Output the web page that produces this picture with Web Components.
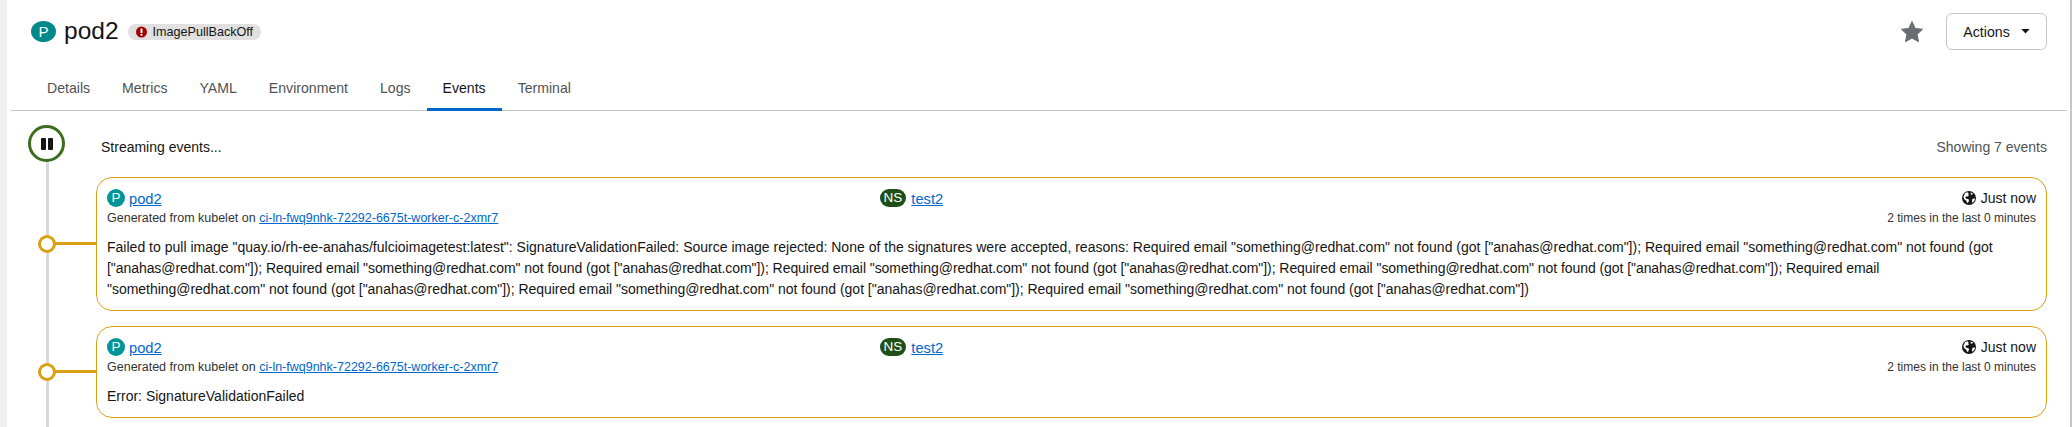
<!DOCTYPE html>
<html>
<head>
<meta charset="utf-8">
<title>pod2 events</title>
<style>
html, body { margin: 0; height: 100%; background: #fff; overflow: hidden; }
body { font-family: "Liberation Sans", sans-serif; color: #151515; }
</style>
</head>
<body>
<pod-page></pod-page>
<script>
const CLAUSE = 'Required email "something@redhat.com" not found (got ["anahas@redhat.com"]);';
// letter-spacing per line keeps the line ends where the reference has them
const LINES = [
  ['Failed to pull image "quay.io/rh-ee-anahas/fulcioimagetest:latest": SignatureValidationFailed: Source image rejected: None of the signatures were accepted, reasons: ' + CLAUSE + ' Required email "something@redhat.com" not found (got', '.01px'],
  ['["anahas@redhat.com"]); ' + CLAUSE + ' ' + CLAUSE + ' ' + CLAUSE + ' Required email', '-.06px'],
  ['"something@redhat.com" not found (got ["anahas@redhat.com"]); ' + CLAUSE + ' Required email "something@redhat.com" not found (got ["anahas@redhat.com"])', '-.03px']
];

customElements.define('res-badge', class ResBadge extends HTMLElement {
  constructor() {
    super();
    this.attachShadow({ mode: 'open' }).innerHTML = `
<style>
:host {
  display: inline-flex; align-items: center; justify-content: center;
  height: 18px; min-width: 18px; padding: 0 4px; box-sizing: border-box;
  border-radius: 9px; background: var(--bg, #009596); color: #fff;
  font-size: 13.5px; line-height: 18px;
}
</style><slot></slot>`;
  }
});

customElements.define('page-heading', class PageHeading extends HTMLElement {
  constructor() {
    super();
    this.attachShadow({ mode: 'open' }).innerHTML = `
<style>
:host { display: flex; align-items: center; height: 63px; padding: 0 23px 0 24px; box-sizing: border-box; }
.p { width: 25px; height: 21px; border-radius: 50%; background: #00898b; color: #fff; font-size: 15px;
  display: flex; align-items: center; justify-content: center; margin-right: 8px; }
h1 { margin: 0 0 2px; font-size: 24.5px; font-weight: 400; line-height: 30px; }
.status { display: inline-flex; align-items: center; gap: 6px; height: 16px; margin-left: 9px; padding: 0 8px 0 8px;
  border-radius: 8px; background: #e0e0e0; font-size: 12.6px; }
.grow { flex: 1; }
.star { margin-right: 22px; }
button { font: inherit; font-size: 14.2px; color: #151515; background: #fff; border: 1px solid #c7c7c7; border-radius: 6px;
  width: 101px; height: 37px; display: flex; align-items: center; justify-content: center; gap: 11px; padding: 0; }
</style>
<div class="p">P</div>
<h1>pod2</h1>
<span class="status">
  <svg width="11" height="12" viewBox="0 0 11 12"><circle cx="5.500" cy="6" r="5.500" fill="#a30000"/><rect x="4.500" y="2.500" width="2" height="4.500" rx=".6" fill="#fff"/><circle cx="5.500" cy="8.800" r="1.100" fill="#fff"/></svg>
  ImagePullBackOff
</span>
<div class="grow"></div>
<svg class="star" width="24" height="24" viewBox="0 0 24 24"><path d="M12 1.500l3.200 6.900 7.300.9-5.400 5.100 1.400 7.300L12 18.100l-6.500 3.600 1.400-7.300L1.500 9.300l7.300-.9z" fill="#6a6e73" stroke="#6a6e73" stroke-width="1" stroke-linejoin="round"/></svg>
<button>Actions <svg width="9" height="5" viewBox="0 0 10 6"><path d="M0 0h10L5 5.500z" fill="#151515"/></svg></button>`;
  }
});

customElements.define('tab-bar', class TabBar extends HTMLElement {
  constructor() {
    super();
    const tabs = ['Details', 'Metrics', 'YAML', 'Environment', 'Logs', 'Events', 'Terminal'];
    this.attachShadow({ mode: 'open' }).innerHTML = `
<style>
:host { display: flex; height: 48px; margin: 0 3px 0 4px; padding-left: 20px; border-bottom: 1px solid #c7c7c7; box-sizing: border-box; font-size: 14.1px; }
a { display: flex; align-items: center; padding: 3px 16px 0; color: #4f5255; position: relative; }
a.on { color: #151515; }
a.on::after { content: ""; position: absolute; left: 0; right: 0; bottom: -1px; height: 3px; background: #06c; }
</style>
${tabs.map(t => `<a class="${t === 'Events' ? 'on' : ''}">${t}</a>`).join('')}`;
  }
});

customElements.define('event-card', class EventCard extends HTMLElement {
  constructor() {
    super();
    this.attachShadow({ mode: 'open' }).innerHTML = `
<style>
:host { display: block; position: relative; margin-left: 89px; border: 1px solid #daa015; border-radius: 16px; padding: 11px 10px 10px 10px; background: #fff; }
:host(:not(:first-child)) { margin-top: 15px; }
.dot { position: absolute; left: -59px; top: 50%; margin-top: -9px; width: 18px; height: 18px; box-sizing: border-box; border: 3px solid #daa015; border-radius: 50%; background: #fff; z-index: 1; }
.tick { position: absolute; left: -42px; width: 42px; top: 50%; margin-top: -2px; height: 3px; background: #daa015; }
.top { display: grid; grid-template-columns: 40% 1fr auto; }
.res { display: flex; align-items: center; gap: 4px; height: 18px; font-size: 14px; }
.res a { font-size: 14.7px; margin-top: 2px; }
.mid { margin-left: 1px; }
.mid .res { gap: 5px; }
a { color: #06c; text-decoration: underline; }
.sub { font-size: 12px; color: #333; line-height: 18px; margin-top: 2px; }
.sub.left { font-size: 12.5px; }
.right { display: flex; flex-direction: column; align-items: flex-end; }
.msg { font-size: 14px; line-height: 21px; margin-top: 10px; white-space: nowrap; }
</style>
<div class="dot"></div><div class="tick"></div>
<div class="top">
  <div>
    <div class="res"><res-badge>P</res-badge><a>pod2</a></div>
    <div class="sub left">Generated from kubelet on <a>ci-ln-fwq9nhk-72292-6675t-worker-c-2xmr7</a></div>
  </div>
  <div class="mid"><div class="res"><res-badge style="--bg:#1e4f18">NS</res-badge><a>test2</a></div></div>
  <div class="right">
    <div class="res" style="gap:5px"><svg width="14" height="14" viewBox="0 0 16 16"><circle cx="8" cy="8" r="8" fill="#151515"/><path d="M3.500 2.200l2.700-.7 1.500 1-.8 1.300 1.200 1-1.900 1.500-1.800.1-.6 1.200 1.500 1.600h1.900l.8 1.300-.7 2.400-1.300.7-1.300-2.800-2.200-1.500-.9-2.500zM10 1.600l2.600 1.300-1 1.400-1.600-.2zM11.800 9.200l2.700-1 .2 2.200-2.400 3-.9-.7z" fill="#fff"/></svg><span>Just now</span></div>
    <div class="sub">2 times in the last 0 minutes</div>
  </div>
</div>
<div class="msg"><slot></slot></div>`;
  }
});

customElements.define('events-view', class EventsView extends HTMLElement {
  constructor() {
    super();
    this.attachShadow({ mode: 'open' }).innerHTML = `
<style>
:host { display: block; position: relative; height: 316px; overflow: hidden; padding-right: 23px; }
.rail { position: absolute; left: 39px; top: 40px; bottom: 0; width: 3px; background: #d8d8d8; }
.head { display: flex; align-items: center; justify-content: space-between; box-sizing: border-box; height: 66px; padding-top: 5px; margin-left: 94px; font-size: 14px; }
.head .r { color: #4f5255; }
.pause { position: absolute; left: 21px; top: 14px; width: 37px; height: 37px; box-sizing: border-box; border: 3px solid #3d6e1e; border-radius: 50%; background: #fff; display: flex; align-items: center; justify-content: center; gap: 2px; }
.pause i { width: 5px; height: 12px; background: #151515; border-radius: 1px; }
</style>
<div class="rail"></div>
<div class="pause"><i></i><i></i></div>
<div class="head"><span>Streaming events...</span><span class="r">Showing 7 events</span></div>
<slot></slot>`;
  }
});

customElements.define('pod-page', class PodPage extends HTMLElement {
  constructor() {
    super();
    this.attachShadow({ mode: 'open' }).innerHTML = `
<style>
:host { display: block; height: 427px; box-sizing: border-box; border-left: 7px solid #f0f0f0; border-right: 2px solid #c7c7c7; overflow: hidden; }
</style>
<page-heading></page-heading>
<tab-bar></tab-bar>
<events-view>
  <event-card>${LINES.map(l => `<span style="letter-spacing:${l[1]}">${l[0]}</span>`).join('<br>')}</event-card>
  <event-card>Error: SignatureValidationFailed</event-card>
</events-view>`;
  }
});
</script>
</body>
</html>
